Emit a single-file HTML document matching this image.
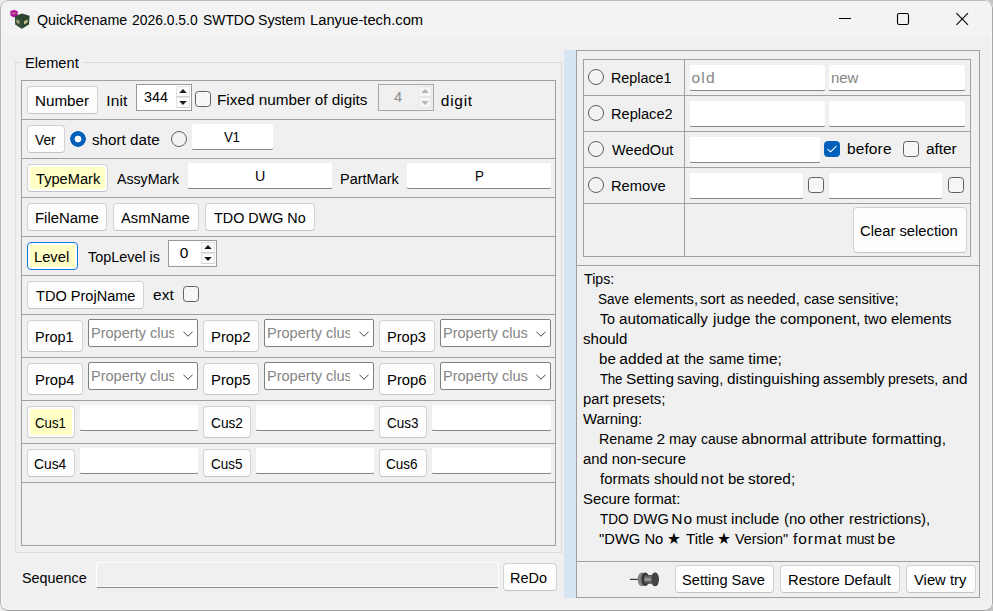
<!DOCTYPE html>
<html><head><meta charset="utf-8"><title>QuickRename</title>
<style>
html,body{margin:0;padding:0;}
body{width:993px;height:611px;overflow:hidden;background:linear-gradient(135deg,#ececec 0%,#ececec 40%,#c2c2c2 60%,#c2c2c2 100%);position:relative;font:15.5px "Liberation Sans",sans-serif;}
.abs,.t,.btn,.le,.sp,.cb,.ck,.rd,.hl,.vl{position:absolute;box-sizing:border-box;}
.t{white-space:pre;transform-origin:0 0;line-height:20px;height:20px;font-size:15.5px;font-family:"Liberation Sans",sans-serif;}
#win{position:absolute;left:0;top:0;width:993px;height:611px;border-radius:8px;background:#f0f0f0;overflow:hidden;}
#wb{position:absolute;left:0;top:0;width:993px;height:611px;box-sizing:border-box;border:1px solid;border-color:#bcbcbc #a8a8a8 #a0a0a0 #b4b4b4;box-shadow:inset 0 0 0 1px #f7f7f7;border-radius:8px;pointer-events:none;}
#tb{position:absolute;left:0;top:0;width:100%;height:38px;background:#f3f3f3;}
.btn{background:#fdfdfd;border:1px solid #d2d2d2;border-bottom-color:#c4c4c4;border-radius:4px;}
.btn.y{background:#fefefe linear-gradient(#ffffc6,#ffffc6) no-repeat 2px 2px;background-size:calc(100% - 4px) calc(100% - 4px);}
.btn.f{border-color:#1277d3;}
.le{background:#fff;border:1px solid #efefef;border-bottom:1px solid #868686;border-radius:3px;}
.le.dis{background:#f0f0f0;border-color:#fdfdfd;border-bottom-color:#8a8a8a;box-shadow:inset 0 -1px 0 #fdfdfd;border-radius:2px;}
.sp{background:#fff;border:1px solid #999;}
.sp.dis{background:#f0f0f0;border-color:#a8a8a8;}
.cb{background:#fff;border:1px solid #808080;border-radius:2px;}
.ck{width:16px;height:16px;border:1px solid #606060;border-radius:3.5px;background:#f6f6f6;}
.ck.on{background:#005fb8;border-color:#005fb8;}
.rd{width:16px;height:16px;border:1px solid #606060;border-radius:50%;background:#f3f3f3;}
.rd.on{border:none;background:radial-gradient(circle at 50% 50%,#fff 0,#fff 2.9px,#005fb8 3.8px,#005fb8 7.6px,rgba(0,95,184,0) 8.2px);}
.hl{height:1px;background:#a0a0a0;}
.vl{width:1px;background:#a0a0a0;}
.fr{position:absolute;box-sizing:border-box;border:1px solid #a0a0a0;}
.sb{position:absolute;box-sizing:border-box;width:14px;height:11px;background:#fbfbfb;border:1px solid #e4e4e4;border-bottom-color:#d2d2d2;}
.cbt{position:absolute;box-sizing:border-box;height:20px;line-height:20px;overflow:hidden;white-space:pre;color:#858585;font-size:15.5px;}
.cbt span{display:inline-block;transform-origin:0 0;transform:scaleX(0.938);}
.sb.d{background:#f5f5f5;border-color:#e6e6e6;}

</style></head>
<body>
<div id="win">
<div id="tb"></div>
<!-- app icon -->
<svg class="abs" style="left:8px;top:8px" width="24" height="24" viewBox="0 0 24 24">
<path d="M2.2 3.2 L6 1.8 L9.8 3.2 L9.6 7.8 L6 9.4 L2.6 7.8 Z" fill="#b0189e"/>
<path d="M4 4.8 h3.6 v1 h-3.6z" fill="#d8c070" opacity=".8"/>
<path d="M7 8 L14 5.6 L21.6 7.8 L21 16.6 L14 20.8 L7.4 16.4 Z" fill="#2e4630"/>
<path d="M7 8 L14 10.4 L14 20.8 L7.4 16.4 Z" fill="#34503a"/>
<path d="M8.4 11.4 l3 1.2 v3.6 l-3 -1.6z" fill="#c8c39a" opacity=".75"/>
<path d="M16 13.2 l3.6 -1.8 v3 l-3.6 2z" fill="#e0d49a" opacity=".85"/>
</svg>
<!-- window controls -->
<svg class="abs" style="left:830px;top:4px" width="160" height="30" viewBox="0 0 160 30">
<path d="M9 14.5 H21" stroke="#000" stroke-width="1" fill="none"/>
<rect x="67.5" y="9.5" width="11" height="11" rx="1.8" fill="none" stroke="#000" stroke-width="1.1"/>
<path d="M126.4 9.1 L138 20.9 M138 9.1 L126.4 20.9" stroke="#000" stroke-width="1.1" fill="none"/>
</svg>
<!-- LEFT group box -->
<div class="fr" style="left:15px;top:62px;width:547px;height:491px;border-color:#dcdcdc"></div>
<div class="abs" style="left:22px;top:52px;width:60px;height:20px;background:#f0f0f0"></div>
<div class="fr" style="left:21px;top:80px;width:535px;height:466px"></div>
<div class="hl" style="left:21px;top:119px;width:535px"></div>
<div class="hl" style="left:21px;top:158px;width:535px"></div>
<div class="hl" style="left:21px;top:197px;width:535px"></div>
<div class="hl" style="left:21px;top:236px;width:535px"></div>
<div class="hl" style="left:21px;top:275px;width:535px"></div>
<div class="hl" style="left:21px;top:314px;width:535px"></div>
<div class="hl" style="left:21px;top:357px;width:535px"></div>
<div class="hl" style="left:21px;top:400px;width:535px"></div>
<div class="hl" style="left:21px;top:443px;width:535px"></div>
<div class="hl" style="left:21px;top:482px;width:535px"></div>
<!-- row1 -->
<div class="btn" style="left:27px;top:86px;width:71px;height:28px"></div>
<div class="sp" style="left:136px;top:84px;width:56px;height:27px"></div>
<div class="sb" style="left:176px;top:86px"></div><div class="sb" style="left:176px;top:97px"></div>
<svg class="abs" style="left:176px;top:86px" width="14" height="22" viewBox="0 0 14 22"><path d="M3.2 7 L7 3 L10.8 7 Z M3.2 15 L7 19 L10.8 15 Z" fill="#1a1a1a"/></svg>
<div class="ck" style="left:195px;top:91px"></div>
<div class="sp dis" style="left:378px;top:84px;width:56px;height:27px"></div>
<div class="sb d" style="left:418px;top:86px"></div><div class="sb d" style="left:418px;top:97px"></div>
<svg class="abs" style="left:418px;top:86px" width="14" height="22" viewBox="0 0 14 22"><path d="M3.2 7 L7 3 L10.8 7 Z M3.2 15 L7 19 L10.8 15 Z" fill="#b4b4b4"/></svg>
<!-- row2 -->
<div class="btn" style="left:27px;top:125px;width:38px;height:28px"></div>
<div class="rd on" style="left:70px;top:131px"></div>
<div class="rd" style="left:171px;top:131px"></div>
<div class="le" style="left:191px;top:123px;width:83px;height:27px"></div>
<!-- row3 -->
<div class="btn y" style="left:27px;top:164px;width:81px;height:28px"></div>
<div class="le" style="left:187px;top:162px;width:146px;height:27px"></div>
<div class="le" style="left:406px;top:162px;width:146px;height:27px"></div>
<!-- row4 -->
<div class="btn" style="left:27px;top:203px;width:80px;height:28px"></div>
<div class="btn" style="left:113px;top:203px;width:86px;height:28px"></div>
<div class="btn" style="left:205px;top:203px;width:110px;height:28px"></div>
<!-- row5 -->
<div class="btn y f" style="left:27px;top:242px;width:51px;height:28px"></div>
<div class="sp" style="left:168px;top:240px;width:49px;height:27px"></div>
<div class="sb" style="left:201px;top:242px"></div><div class="sb" style="left:201px;top:253px"></div>
<svg class="abs" style="left:201px;top:242px" width="14" height="22" viewBox="0 0 14 22"><path d="M3.2 7 L7 3 L10.8 7 Z M3.2 15 L7 19 L10.8 15 Z" fill="#1a1a1a"/></svg>
<!-- row6 -->
<div class="btn" style="left:27px;top:281px;width:117px;height:28px"></div>
<div class="ck" style="left:183px;top:286px"></div>
<!-- row7/8 -->
<div class="btn" style="left:27px;top:320px;width:56px;height:32px"></div>
<div class="cb" style="left:88px;top:319px;width:110px;height:28px"></div>
<div class="cbt" style="left:91px;top:323px;width:83px"><span>Property clus</span></div>
<svg class="abs" style="left:182px;top:330px" width="12" height="8" viewBox="0 0 12 8"><path d="M1.5 1.8 L6 6.2 L10.5 1.8" fill="none" stroke="#444" stroke-width="1"/></svg>
<div class="btn" style="left:203px;top:320px;width:56px;height:32px"></div>
<div class="cb" style="left:264px;top:319px;width:110px;height:28px"></div>
<div class="cbt" style="left:267px;top:323px;width:83px"><span>Property clus</span></div>
<svg class="abs" style="left:358px;top:330px" width="12" height="8" viewBox="0 0 12 8"><path d="M1.5 1.8 L6 6.2 L10.5 1.8" fill="none" stroke="#444" stroke-width="1"/></svg>
<div class="btn" style="left:379px;top:320px;width:56px;height:32px"></div>
<div class="cb" style="left:440px;top:319px;width:111px;height:28px"></div>
<div class="cbt" style="left:443px;top:323px;width:85px"><span>Property clus</span></div>
<svg class="abs" style="left:535px;top:330px" width="12" height="8" viewBox="0 0 12 8"><path d="M1.5 1.8 L6 6.2 L10.5 1.8" fill="none" stroke="#444" stroke-width="1"/></svg>
<div class="btn" style="left:27px;top:363px;width:56px;height:32px"></div>
<div class="cb" style="left:88px;top:362px;width:110px;height:28px"></div>
<div class="cbt" style="left:91px;top:366px;width:83px"><span>Property clus</span></div>
<svg class="abs" style="left:182px;top:373px" width="12" height="8" viewBox="0 0 12 8"><path d="M1.5 1.8 L6 6.2 L10.5 1.8" fill="none" stroke="#444" stroke-width="1"/></svg>
<div class="btn" style="left:203px;top:363px;width:56px;height:32px"></div>
<div class="cb" style="left:264px;top:362px;width:110px;height:28px"></div>
<div class="cbt" style="left:267px;top:366px;width:83px"><span>Property clus</span></div>
<svg class="abs" style="left:358px;top:373px" width="12" height="8" viewBox="0 0 12 8"><path d="M1.5 1.8 L6 6.2 L10.5 1.8" fill="none" stroke="#444" stroke-width="1"/></svg>
<div class="btn" style="left:379px;top:363px;width:56px;height:32px"></div>
<div class="cb" style="left:440px;top:362px;width:111px;height:28px"></div>
<div class="cbt" style="left:443px;top:366px;width:85px"><span>Property clus</span></div>
<svg class="abs" style="left:535px;top:373px" width="12" height="8" viewBox="0 0 12 8"><path d="M1.5 1.8 L6 6.2 L10.5 1.8" fill="none" stroke="#444" stroke-width="1"/></svg>
<!-- row9/10 -->
<div class="btn y" style="left:27px;top:406px;width:48px;height:32px"></div>
<div class="le" style="left:79px;top:404px;width:120px;height:27px"></div>
<div class="btn" style="left:203px;top:406px;width:48px;height:32px"></div>
<div class="le" style="left:255px;top:404px;width:120px;height:27px"></div>
<div class="btn" style="left:379px;top:406px;width:48px;height:32px"></div>
<div class="le" style="left:431px;top:404px;width:121px;height:27px"></div>
<div class="btn" style="left:27px;top:449px;width:48px;height:28px"></div>
<div class="le" style="left:79px;top:447px;width:120px;height:27px"></div>
<div class="btn" style="left:203px;top:449px;width:48px;height:28px"></div>
<div class="le" style="left:255px;top:447px;width:120px;height:27px"></div>
<div class="btn" style="left:379px;top:449px;width:48px;height:28px"></div>
<div class="le" style="left:431px;top:447px;width:121px;height:27px"></div>
<!-- sequence -->
<div class="le dis" style="left:96px;top:562px;width:403px;height:26px"></div>
<div class="btn" style="left:503px;top:563px;width:54px;height:28px"></div>
<!-- splitter -->
<div class="abs" style="left:564px;top:50px;width:12px;height:548px;background:#d7e4f2"></div>
<!-- RIGHT -->
<div class="fr" style="left:576px;top:50px;width:404px;height:548px"></div>
<div class="hl" style="left:576px;top:265px;width:404px"></div>
<div class="hl" style="left:576px;top:561px;width:404px"></div>
<div class="fr" style="left:583px;top:59px;width:388px;height:198px"></div>
<div class="vl" style="left:684px;top:59px;height:198px"></div>
<div class="hl" style="left:583px;top:95px;width:388px"></div>
<div class="hl" style="left:583px;top:131px;width:388px"></div>
<div class="hl" style="left:583px;top:167px;width:388px"></div>
<div class="hl" style="left:583px;top:203px;width:388px"></div>
<div class="rd" style="left:588px;top:69px"></div>
<div class="rd" style="left:588px;top:105px"></div>
<div class="rd" style="left:588px;top:141px"></div>
<div class="rd" style="left:588px;top:177px"></div>
<div class="le" style="left:689px;top:64px;width:137px;height:27px"></div>
<div class="le" style="left:828px;top:64px;width:138px;height:27px"></div>
<div class="le" style="left:689px;top:100px;width:137px;height:27px"></div>
<div class="le" style="left:828px;top:100px;width:138px;height:27px"></div>
<div class="le" style="left:689px;top:136px;width:132px;height:27px"></div>
<div class="ck on" style="left:824px;top:141px"></div>
<svg class="abs" style="left:824px;top:141px" width="16" height="16" viewBox="0 0 16 16"><path d="M3.9 8.3 L6.6 10.8 L12.1 5.4" stroke="#fff" stroke-width="1.05" fill="none" stroke-linecap="round" stroke-linejoin="round"/></svg>
<div class="ck" style="left:903px;top:141px"></div>
<div class="le" style="left:689px;top:172px;width:115px;height:27px"></div>
<div class="ck" style="left:808px;top:177px"></div>
<div class="le" style="left:828px;top:172px;width:115px;height:27px"></div>
<div class="ck" style="left:948px;top:177px"></div>
<div class="btn" style="left:853px;top:207px;width:114px;height:46px"></div>
<!-- bottom buttons -->
<div class="btn" style="left:675px;top:565px;width:99px;height:28px"></div>
<div class="btn" style="left:780px;top:565px;width:120px;height:28px"></div>
<div class="btn" style="left:906px;top:565px;width:70px;height:28px"></div>
<!-- pin -->
<svg class="abs" style="left:628px;top:570px" width="34" height="20" viewBox="0 0 34 20">
<defs><linearGradient id="pg" x1="0" y1="0" x2="0" y2="1"><stop offset="0" stop-color="#4e4e4e"/><stop offset=".45" stop-color="#8a8a8a"/><stop offset=".55" stop-color="#a8a8a8"/><stop offset=".7" stop-color="#6a6a6a"/><stop offset="1" stop-color="#454545"/></linearGradient></defs>
<path d="M2 9.3 H10" stroke="#111" stroke-width="1"/>
<ellipse cx="14.2" cy="9.3" rx="4.6" ry="6.9" fill="#808080"/>
<ellipse cx="17.3" cy="9.3" rx="3.9" ry="6.7" fill="#353535"/>
<rect x="16.2" y="5.1" width="10" height="8.6" rx="1" fill="url(#pg)"/>
<ellipse cx="26.6" cy="9.3" rx="3.6" ry="6.9" fill="#5e5e5e"/>
<ellipse cx="27.4" cy="9.3" rx="3.6" ry="6.9" fill="#444"/>
</svg>
<div id="wb"></div>
</div>

<!-- text -->
<span class="t" style="left:36.7px;top:10px;transform:scaleX(0.9180)">QuickRename </span>
<span class="t" style="left:132.3px;top:10px;transform:scaleX(0.8958)">2026.0.5.0 </span>
<span class="t" style="left:202.7px;top:10px;transform:scaleX(0.8964)">SWTDO </span>
<span class="t" style="left:258.0px;top:10px;transform:scaleX(0.9140)">System </span>
<span class="t" style="left:310.1px;top:10px;transform:scaleX(0.9513)">Lanyue-tech.com</span>
<span class="t" style="left:24.9px;top:53px;transform:scaleX(0.9446)">Element</span>
<span class="t" style="left:34.9px;top:91px;transform:scaleX(0.9815)">Number</span>
<span class="t" style="left:106.3px;top:91px;letter-spacing:0.117px">Init</span>
<span class="t" style="left:143.6px;top:87px;transform:scaleX(0.9240)">344</span>
<span class="t" style="left:217.3px;top:90px;transform:scaleX(0.9868)">Fixed number of digits</span>
<span class="t" style="left:393.8px;top:87px;transform:scaleX(0.9500);color:#8c8c8c">4</span>
<span class="t" style="left:440.8px;top:91px;letter-spacing:0.727px">digit</span>
<span class="t" style="left:35.0px;top:130px;transform:scaleX(0.8870)">Ver</span>
<span class="t" style="left:91.8px;top:130px;transform:scaleX(0.9822)">short date</span>
<span class="t" style="left:224.4px;top:127px;letter-spacing:-0.442px;transform:scaleX(0.8600)">V1</span>
<span class="t" style="left:35.6px;top:169px;transform:scaleX(0.9441)">TypeMark</span>
<span class="t" style="left:117.3px;top:169px;transform:scaleX(0.9132)">AssyMark</span>
<span class="t" style="left:255.1px;top:166px;transform:scaleX(0.9222)">U</span>
<span class="t" style="left:340.0px;top:169px;transform:scaleX(0.9355)">PartMark</span>
<span class="t" style="left:474.9px;top:166px;transform:scaleX(0.8600)">P</span>
<span class="t" style="left:34.6px;top:208px;transform:scaleX(0.9615)">FileName</span>
<span class="t" style="left:121.4px;top:208px;transform:scaleX(0.9486)">AsmName</span>
<span class="t" style="left:213.9px;top:208px;transform:scaleX(0.9263)">TDO DWG No</span>
<span class="t" style="left:34.2px;top:247px;transform:scaleX(0.9486)">Level</span>
<span class="t" style="left:87.9px;top:247px;transform:scaleX(0.9286)">TopLevel is</span>
<span class="t" style="left:179.8px;top:243px">0</span>
<span class="t" style="left:35.9px;top:286px;transform:scaleX(0.9387)">TDO ProjName</span>
<span class="t" style="left:153.1px;top:285px;letter-spacing:0.020px">ext</span>
<span class="t" style="left:34.8px;top:327px;transform:scaleX(0.9350)">Prop1</span>
<span class="t" style="left:210.8px;top:327px;transform:scaleX(0.9575)">Prop2</span>
<span class="t" style="left:387.0px;top:327px;transform:scaleX(0.9425)">Prop3</span>
<span class="t" style="left:34.8px;top:370px;transform:scaleX(0.9575)">Prop4</span>
<span class="t" style="left:210.8px;top:370px;transform:scaleX(0.9575)">Prop5</span>
<span class="t" style="left:386.8px;top:370px;transform:scaleX(0.9575)">Prop6</span>
<span class="t" style="left:34.7px;top:413px;transform:scaleX(0.8526)">Cus1</span>
<span class="t" style="left:210.8px;top:413px;transform:scaleX(0.8829)">Cus2</span>
<span class="t" style="left:386.7px;top:413px;transform:scaleX(0.8686)">Cus3</span>
<span class="t" style="left:34.2px;top:454px;transform:scaleX(0.8914)">Cus4</span>
<span class="t" style="left:210.6px;top:454px;transform:scaleX(0.8686)">Cus5</span>
<span class="t" style="left:386.3px;top:454px;transform:scaleX(0.8743)">Cus6</span>
<span class="t" style="left:22.3px;top:568px;transform:scaleX(0.9265)">Sequence</span>
<span class="t" style="left:510.3px;top:568px;transform:scaleX(0.9342)">ReDo</span>
<span class="t" style="left:610.8px;top:68px;transform:scaleX(0.9234)">Replace1</span>
<span class="t" style="left:610.9px;top:104px;transform:scaleX(0.9406)">Replace2</span>
<span class="t" style="left:611.5px;top:140px;transform:scaleX(0.9415)">WeedOut</span>
<span class="t" style="left:610.5px;top:176px;transform:scaleX(0.9482)">Remove</span>
<span class="t" style="left:691.4px;top:68px;letter-spacing:1.250px;color:#858585">old</span>
<span class="t" style="left:830.5px;top:68px;transform:scaleX(0.9630);color:#858585">new</span>
<span class="t" style="left:846.9px;top:139px;letter-spacing:0.140px">before</span>
<span class="t" style="left:926.1px;top:139px;letter-spacing:-0.124px">after</span>
<span class="t" style="left:860.0px;top:221px;transform:scaleX(0.9535)">Clear selection</span>
<span class="t" style="left:681.9px;top:570px;transform:scaleX(0.9430)">Setting Save</span>
<span class="t" style="left:787.8px;top:570px;transform:scaleX(0.9542)">Restore Default</span>
<span class="t" style="left:914.4px;top:570px;transform:scaleX(0.9545)">View try</span>
<span class="t" style="left:583.5px;top:269px;transform:scaleX(0.9156)">Tips:</span>
<span class="t" style="left:598.3px;top:289px;transform:scaleX(0.8765)">Save </span>
<span class="t" style="left:633.5px;top:289px;transform:scaleX(0.9523)">elements, </span>
<span class="t" style="left:700.1px;top:289px;transform:scaleX(0.9640)">sort </span>
<span class="t" style="left:730.0px;top:289px;letter-spacing:-0.465px;transform:scaleX(0.8600)">as </span>
<span class="t" style="left:747.4px;top:289px;transform:scaleX(0.9407)">needed, </span>
<span class="t" style="left:803.5px;top:289px;transform:scaleX(0.9355)">case </span>
<span class="t" style="left:837.7px;top:289px;transform:scaleX(0.9371)">sensitive;</span>
<span class="t" style="left:600.3px;top:309px;transform:scaleX(0.9187)">To </span>
<span class="t" style="left:619.2px;top:309px;transform:scaleX(0.9815)">automatically </span>
<span class="t" style="left:712.5px;top:309px;transform:scaleX(0.9865)">judge </span>
<span class="t" style="left:755.2px;top:309px;transform:scaleX(0.9714)">the </span>
<span class="t" style="left:779.7px;top:309px;transform:scaleX(0.9899)">component, </span>
<span class="t" style="left:864.4px;top:309px;transform:scaleX(0.9500)">two </span>
<span class="t" style="left:891.1px;top:309px;transform:scaleX(0.9629)">elements</span>
<span class="t" style="left:582.8px;top:329px;transform:scaleX(0.9705)">should</span>
<span class="t" style="left:599.0px;top:349px;transform:scaleX(0.9750)">be </span>
<span class="t" style="left:619.2px;top:349px;letter-spacing:0.100px">added </span>
<span class="t" style="left:666.1px;top:349px">at </span>
<span class="t" style="left:683.9px;top:349px;transform:scaleX(0.9333)">the </span>
<span class="t" style="left:708.8px;top:349px;transform:scaleX(0.9294)">same </span>
<span class="t" style="left:748.2px;top:349px;letter-spacing:0.025px">time;</span>
<span class="t" style="left:600.1px;top:369px;letter-spacing:-0.326px;transform:scaleX(0.8600)">The </span>
<span class="t" style="left:626.0px;top:369px;transform:scaleX(0.9935)">Setting </span>
<span class="t" style="left:677.2px;top:369px;transform:scaleX(0.9404)">saving, </span>
<span class="t" style="left:726.5px;top:369px;transform:scaleX(0.9870)">distinguishing </span>
<span class="t" style="left:822.9px;top:369px;transform:scaleX(0.9406)">assembly </span>
<span class="t" style="left:888.0px;top:369px;transform:scaleX(0.9113)">presets, </span>
<span class="t" style="left:941.6px;top:369px;transform:scaleX(0.9875)">and</span>
<span class="t" style="left:582.6px;top:389px;transform:scaleX(0.9560)">part presets;</span>
<span class="t" style="left:583.2px;top:409px;transform:scaleX(0.9617)">Warning:</span>
<span class="t" style="left:598.9px;top:429px;transform:scaleX(0.9193)">Rename </span>
<span class="t" style="left:656.5px;top:429px">2 </span>
<span class="t" style="left:669.0px;top:429px;transform:scaleX(0.9393)">may </span>
<span class="t" style="left:700.8px;top:429px;transform:scaleX(0.8950)">cause </span>
<span class="t" style="left:741.5px;top:429px;letter-spacing:0.043px">abnormal </span>
<span class="t" style="left:810.3px;top:429px;letter-spacing:0.100px">attribute </span>
<span class="t" style="left:871.9px;top:429px;letter-spacing:0.100px">formatting,</span>
<span class="t" style="left:582.9px;top:449px;transform:scaleX(0.9566)">and non-secure</span>
<span class="t" style="left:600.2px;top:469px;transform:scaleX(0.9608)">formats </span>
<span class="t" style="left:653.6px;top:469px;transform:scaleX(0.9636)">should </span>
<span class="t" style="left:700.7px;top:469px;letter-spacing:0.700px">not </span>
<span class="t" style="left:727.8px;top:469px;transform:scaleX(0.9625)">be </span>
<span class="t" style="left:748.1px;top:469px;transform:scaleX(0.9956)">stored;</span>
<span class="t" style="left:582.8px;top:489px;transform:scaleX(0.9577)">Secure format:</span>
<span class="t" style="left:600.2px;top:509px;transform:scaleX(0.8750)">TDO </span>
<span class="t" style="left:632.7px;top:509px;transform:scaleX(0.9444)">DWG </span>
<span class="t" style="left:671.2px;top:509px;letter-spacing:1.200px">No </span>
<span class="t" style="left:696.3px;top:509px;transform:scaleX(0.9215)">must </span>
<span class="t" style="left:731.4px;top:509px;transform:scaleX(0.9813)">include </span>
<span class="t" style="left:783.9px;top:509px;transform:scaleX(0.9667)">(no </span>
<span class="t" style="left:809.3px;top:509px;letter-spacing:-0.143px">other </span>
<span class="t" style="left:848.9px;top:509px;transform:scaleX(0.9622)">restrictions),</span>
<span class="t" style="left:599.1px;top:529px;transform:scaleX(0.9515)">"DWG No </span>
<span class="t" style="left:667.3px;top:529px;transform:scaleX(0.9636)">★ </span>
<span class="t" style="left:686.0px;top:529px;transform:scaleX(0.9714)">Title </span>
<span class="t" style="left:717.0px;top:529px;transform:scaleX(0.9636)">★ </span>
<span class="t" style="left:735.3px;top:529px;transform:scaleX(0.9281)">Version" </span>
<span class="t" style="left:793.1px;top:529px;letter-spacing:0.920px">format </span>
<span class="t" style="left:845.7px;top:529px;letter-spacing:-0.240px;transform:scaleX(0.8600)">must </span>
<span class="t" style="left:877.6px;top:529px;letter-spacing:0.600px">be</span>
</body></html>
